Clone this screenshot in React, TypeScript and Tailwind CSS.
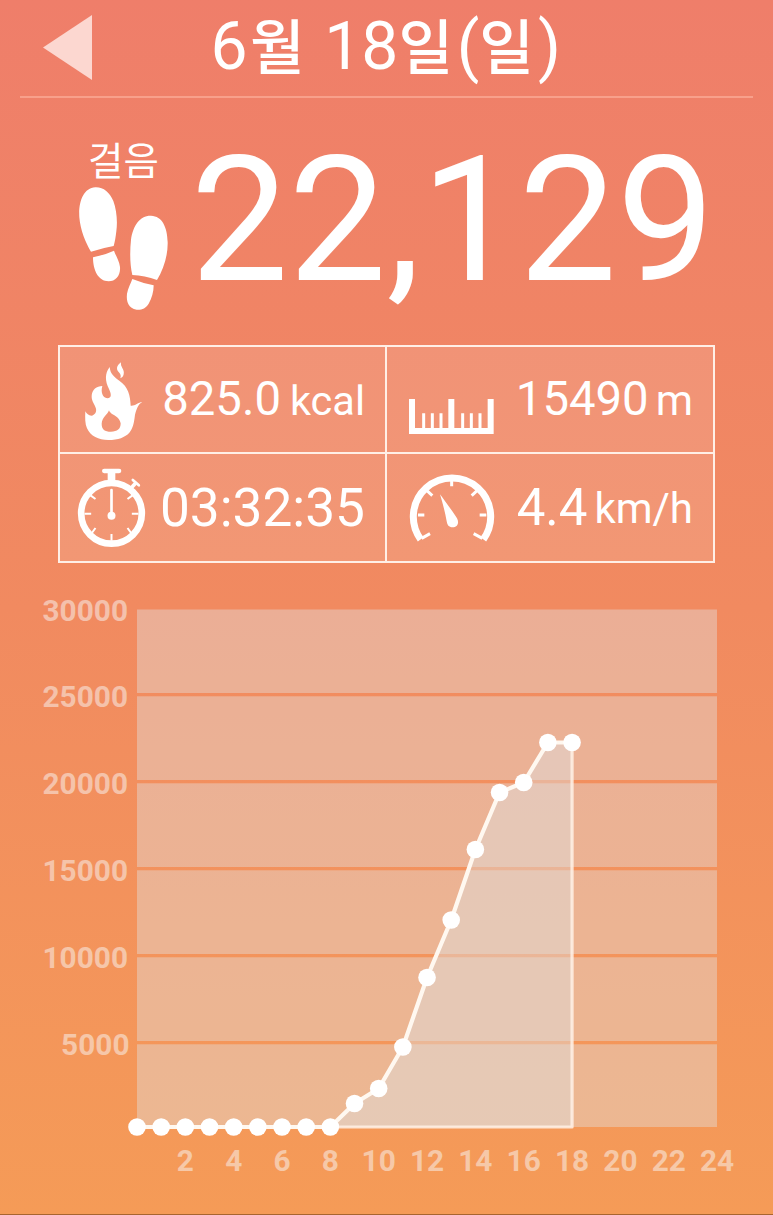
import type { ReactNode } from 'react';

const PLOT_LEFT = 137;
const HOUR = 24.17;
const BASE = 527;
const levels = [527, 503.5, 488.5, 447, 377.5, 320, 249.5, 192.5, 182.5, 142.5, 142.5];
const points = Array.from({ length: 19 }, (_, h) => ({
  x: PLOT_LEFT + h * HOUR,
  y: h < 8 ? BASE : levels[h - 8],
}));
const bands = [
  [9.5, 93],
  [96.3, 180],
  [183.3, 267],
  [270.3, 354],
  [357.3, 441],
  [444.3, 527],
];
const yLabels = [
  { v: '30000', y: 20.7 },
  { v: '25000', y: 107.2 },
  { v: '20000', y: 194 },
  { v: '15000', y: 281 },
  { v: '10000', y: 368 },
  { v: '5000', y: 455 },
];
const xLabels = [2, 4, 6, 8, 10, 12, 14, 16, 18, 20, 22, 24];

function Footprints() {
  return (
    <svg className="block h-[124px] w-[90px]" viewBox="57 170 270 372" fill="white">
      <path d="M106 171C130 170 149 186 160 212C170 240 173 272 169 303C167 320 165 334 161 347Q127 353 93 364C77 338 61 299 58 261C55 215 70 173 106 171Z" />
      <path d="M99 381Q133 374 162 361C167 376 178 391 180 410C182 435 167 453 146 453C115 453 99 420 99 381Z" />
      <path d="M273 256C307 257 322 291 323 335C324 377 310 418 291 449Q254 435 217 434C210 406 209 366 213 328C219 286 240 255 273 256Z" />
      <path d="M217 446Q249 459 281 465C281 485 275 505 266 520C257 534 246 539 230 538C206 534 198 514 201 490C204 473 212 460 217 446Z" />
    </svg>
  );
}

function Flame() {
  return (
    <svg className="block h-[78px] w-[58px]" viewBox="104 80 174 234" fill="white">
      <path
        fillRule="evenodd"
        d="M178 95C180 115 190 124 207 136C234 154 240 181 241 211C253 213 263 201 276 200C263 207 259 220 254 238C251 263 248 279 237 292C224 306 204 314 174 314C144 314 121 303 110 279C104 266 104 247 105 228C109 235 115 241 123 241C134 239 139 230 137 220C135 210 123 198 124 182C125 163 139 152 156 152C151 169 156 187 171 189C186 188 182 174 176 161C164 138 163 114 178 95ZM176 225C171 239 155 246 154 265C154 282 163 289 182 289C201 289 211 281 211 264C209 249 194 240 184 235C180 232 177 229 176 225Z"
      />
      <path d="M212 81C209 95 224 102 220 117C219 122 216 127 210 129C216 113 199 111 200 98C201 91 206 86 212 81Z" />
    </svg>
  );
}

function Stopwatch() {
  return (
    <svg className="block h-[79px] w-[69px]" viewBox="82 400 206 237" fill="none" stroke="white">
      <circle cx="185" cy="536" r="91" strokeWidth="20" />
      <path d="M163 409H208" strokeWidth="13" strokeLinecap="round" />
      <path d="M185 410V440" strokeWidth="23" />
      <path d="M242 462L257 446" strokeWidth="11" />
      <path d="M249 436L267 452" strokeWidth="8" strokeLinecap="round" />
      <path d="M185 466V540" strokeWidth="8" strokeLinecap="round" />
      <circle cx="185" cy="543" r="12" fill="white" stroke="none" />
      <path
        d="M185 618V598M104 537H124M246 537H266M122 482L137 493M248 482L233 493M126 595L137 580M244 595L233 580"
        strokeWidth="6"
      />
    </svg>
  );
}

function Ruler() {
  return (
    <svg className="block h-[35px] w-[85px]" viewBox="88 192 255 105" fill="none" stroke="white">
      <path d="M97 192V288H333V192" strokeWidth="18" />
      <path d="M215 192V290" strokeWidth="18" />
      <path d="M132 235V284M158 235V284M184 235V284M249 235V284M275 235V284M301 235V284" strokeWidth="9" />
    </svg>
  );
}

function Gauge() {
  return (
    <svg className="block h-[70px] w-[86px]" viewBox="86 412 258 210" fill="none" stroke="white">
      <path d="M121 614A116 116 0 1 1 309 614" strokeWidth="21" />
      <path d="M214 434V455M113 541H132M298 541H318M139 467L156 483M291 467L274 483" strokeWidth="9" />
      <path d="M124 611L149 597M306 611L280 597" strokeWidth="9" />
      <path d="M179 479C192 497 218 531 230 551C238 566 230 578 217 578C205 578 201 571 199 560C194 530 186 503 179 479Z" fill="white" stroke="none" />
    </svg>
  );
}

function Value({ className, children }: { className: string; children: ReactNode }) {
  return <div className={`flex items-baseline whitespace-pre leading-none ${className}`}>{children}</div>;
}

function Chart() {
  const line = points.map((p) => `${p.x},${p.y}`).join(' ');
  const last = points[points.length - 1];
  return (
    <svg className="block h-[634px] w-[773px]" viewBox="0 -20 773 634">
      {bands.map(([top, bottom]) => (
        <rect key={top} x={PLOT_LEFT} y={top} width="580" height={bottom - top} fill="rgb(225 225 225 / 0.416)" />
      ))}
      <polygon points={`${line} ${last.x},${BASE}`} fill="rgb(225 225 225 / 0.45)" />
      <path d={`M${PLOT_LEFT} ${BASE}H${last.x}V${last.y}`} fill="none" stroke="#fff1e6" strokeOpacity="0.85" strokeWidth="3.2" strokeLinejoin="round" />
      <polyline points={line} fill="none" stroke="#fff8f0" strokeWidth="4.2" strokeLinejoin="round" />
      {points.map((p) => (
        <circle key={p.x} cx={p.x} cy={p.y} r="8.8" fill="white" />
      ))}
      <g className="font-[Roboto,sans-serif] text-[29.8px] font-bold" fill="rgb(248 248 248 / 0.5)">
        {yLabels.map((l) => (
          <text key={l.v} x={l.v === '5000' ? 129.5 : 128} y={l.y} textAnchor="end">
            {l.v}
          </text>
        ))}
        {xLabels.map((n) => (
          <text key={n} x={PLOT_LEFT + n * HOUR} y="571" textAnchor="middle">
            {n}
          </text>
        ))}
      </g>
    </svg>
  );
}

export default function App() {
  return (
    <main className="flex h-[1215px] w-[773px] flex-col overflow-hidden border-b border-[#a8652f] bg-linear-to-b from-[#ef7e6a] via-[#f18a60] to-[#f59b57] font-[Roboto,'Noto_Sans_CJK_KR',sans-serif] text-white">
      <header className="mx-5 flex h-[98px] shrink-0 border-b-2 border-[#f8a08b]">
        <svg className="mt-[15px] ml-[23px] block h-[65px] w-[49px]" viewBox="0 0 49 65">
          <path d="M0 32.5L49 0V65Z" fill="#fcd7d0" />
        </svg>
        <h1 className="mt-[14px] ml-[118.5px] flex items-baseline text-[66px] leading-[66px] font-normal whitespace-pre">
          <span>6</span>
          <span className="ml-[2.5px] text-[59.5px] font-medium tracking-[3px]">월</span>
          <span> 18</span>
          <span className="text-[59.5px] font-medium tracking-[3.5px]">일</span>
          <span>(</span>
          <span className="text-[59.5px] font-medium tracking-[4px]">일</span>
          <span>)</span>
        </h1>
      </header>

      <section className="flex h-[247px] shrink-0">
        <div className="ml-[79px] flex w-[111.5px] flex-col">
          <p className="mt-[45px] ml-[9px] h-[44px] text-[38.5px] leading-[38px] whitespace-nowrap">걸음</p>
          <Footprints />
        </div>
        <p className="mt-[36px] text-[174.3px] leading-[174px]">22,129</p>
      </section>

      <section className="ml-[58px] grid h-[218px] w-[657px] shrink-0 grid-cols-[327px_1fr] grid-rows-[107px_1fr] border-2 border-[#ffefe6] bg-white/12">
        <div className="flex justify-between border-r-2 border-b-2 border-[#ffefe6] pr-[20px] pl-[25px]">
          <div className="mt-[15px]"><Flame /></div>
          <Value className="mt-[29px] h-[50px] gap-[9px]">
            <span className="text-[47.3px]">825.0</span>
            <span className="text-[41.5px]">kcal</span>
          </Value>
        </div>
        <div className="flex justify-between border-b-2 border-[#ffefe6] pr-[20px] pl-[22px]">
          <div className="mt-[52px]"><Ruler /></div>
          <Value className="mt-[29px] h-[50px] gap-[7px]">
            <span className="text-[47.3px]">15490</span>
            <span className="text-[42.5px]">m</span>
          </Value>
        </div>
        <div className="flex justify-between border-r-2 border-[#ffefe6] pr-[20px] pl-[17px]">
          <div className="mt-[14px]"><Stopwatch /></div>
          <Value className="mt-[28px] h-[56px]">
            <span className="text-[53.2px]">03:32:35</span>
          </Value>
        </div>
        <div className="flex justify-between pr-[20px] pl-[22px]">
          <div className="mt-[18px]"><Gauge /></div>
          <Value className="mt-[28px] h-[52px] gap-[7px]">
            <span className="text-[51px]">4.4</span>
            <span className="relative -top-[2px] text-[42px]">km/h</span>
          </Value>
        </div>
      </section>

      <section className="mt-[17px] shrink-0">
        <Chart />
      </section>
    </main>
  );
}
